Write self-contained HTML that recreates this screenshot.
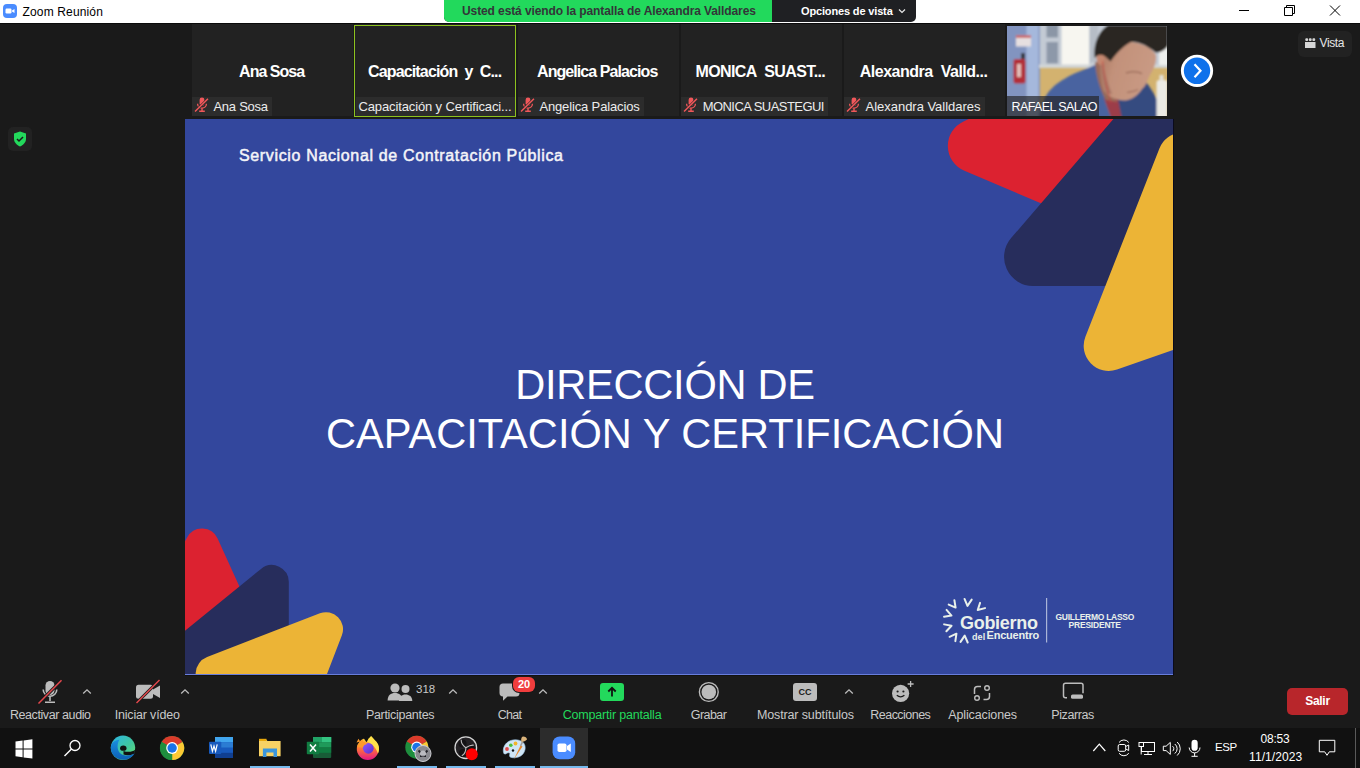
<!DOCTYPE html>
<html><head><meta charset="utf-8">
<style>
*{margin:0;padding:0;box-sizing:border-box}
html,body{width:1360px;height:768px;overflow:hidden;background:#1a1a1a;font-family:"Liberation Sans",sans-serif}
.a{position:absolute}
.t{position:absolute;white-space:nowrap;line-height:1}
#title{left:0;top:0;width:1360px;height:23px;background:#fff}
#banner{left:444px;top:0;width:472px;height:22px;border-radius:0 0 5px 5px;overflow:hidden;background:#1f2023}
#banner .g{left:0;top:0;width:328px;height:22px;background:#22d95c}
.tile{position:absolute;top:26px;width:160px;height:90px;background:#222222}
.tile .nm{position:absolute;left:0;right:0;top:37px;text-align:center;color:#fff;font-weight:bold;font-size:15px;line-height:1}
.tile .lb{position:absolute;left:0;bottom:0;height:19px;background:#2c2c2c;color:#e6e6e6;font-size:12.5px;line-height:19px;padding-left:22px;padding-right:4px;white-space:nowrap}
.mic{position:absolute;left:5px;top:3px;width:12px;height:13px}
#slide{left:185px;top:119px;width:988px;height:556px;background:#33479d;overflow:hidden}
.tb{position:absolute;top:708px;color:#c9c9c9;font-size:12.5px;line-height:1;white-space:nowrap}
#taskbar{left:0;top:728px;width:1360px;height:40px;background:#111111}
.ul{position:absolute;top:766px;height:2px;background:#76b9ed}
</style></head><body>

<div id="title" class="a">
  <svg class="a" style="left:3px;top:4px" width="14" height="14" viewBox="0 0 14 14"><rect width="14" height="14" rx="4" fill="#4a8cff"/><rect x="2.5" y="4.5" width="6" height="5" rx="1.2" fill="#fff"/><path d="M9 6.5 L11.5 5 V9 L9 7.5Z" fill="#fff"/></svg>
  <div class="t" id="ttl" style="left:22.5px;top:6px;font-size:12px;letter-spacing:0.15px;color:#000">Zoom Reunión</div>
  <svg class="a" style="left:1239px;top:5px" width="102" height="11" viewBox="0 0 102 11">
    <path d="M0 5.5H10" stroke="#000" stroke-width="1"/>
    <path d="M45.5 2.5h8v8h-8z M47.5 2.5V0.5h8v8h-2" fill="none" stroke="#000" stroke-width="1"/>
    <path d="M91 0.5L101 10.5M101 0.5L91 10.5" stroke="#000" stroke-width="1"/>
  </svg>
</div>

<div class="a" style="left:0;top:23px;width:1360px;height:1px;background:#0b0b0b"></div>
<div id="banner" class="a">
  <div class="a g"></div>
  <div class="t" id="bn1" style="left:18px;top:5px;font-size:12px;font-weight:bold;letter-spacing:-0.1px;color:#333538">Usted está viendo la pantalla de Alexandra Valldares</div>
  <div class="t" id="bn2" style="left:357px;top:6px;font-size:11px;font-weight:bold;letter-spacing:-0.15px;color:#fff">Opciones de vista</div>
  <svg class="a" style="left:454px;top:8px" width="8" height="6" viewBox="0 0 8 6"><path d="M1 1.5L4 4.5L7 1.5" fill="none" stroke="#e8e8e8" stroke-width="1.2"/></svg>
</div>

<!-- tiles -->
<div class="a" style="left:192px;top:24px;width:161px;height:92px;background:#222222"></div>
<div class="t nmx" style="left:239.1px;top:64px;font-size:16px;font-weight:bold;color:#fff;letter-spacing:-0.98px">Ana Sosa</div>
<div class="a" style="left:192px;top:97px;width:80px;height:19px;background:#2c2c2c"></div>
<svg class="a" style="left:194px;top:96px" width="16" height="17" viewBox="0 0 16 17"><rect x="5.6" y="1.5" width="4.8" height="8.5" rx="2.4" fill="#f0575a"/><path d="M3.6 7.8a4.4 4.4 0 0 0 8.8 0" fill="none" stroke="#f0575a" stroke-width="1.3"/><path d="M8 12.3v2.2M5.2 15.2h5.6" stroke="#f0575a" stroke-width="1.4"/><path d="M0.8 15.8L14.2 2.6" stroke="#2b2b2b" stroke-width="2.6"/><path d="M1 15.5L14 2.7" stroke="#f0575a" stroke-width="1.5"/></svg>
<div class="t lbx" style="left:213.4px;top:100px;font-size:13px;color:#ececec;letter-spacing:-0.24px">Ana Sosa</div>
<div class="a" style="left:355px;top:24px;width:161px;height:92px;background:#222222"></div>
<div class="a" style="left:354px;top:25px;width:162px;height:92px;border:1px solid #8dc21f"></div>
<div class="t nmx" style="left:368.0px;top:64px;font-size:16px;font-weight:bold;color:#fff;letter-spacing:-0.85px">Capacitación&nbsp; y&nbsp; C...</div>
<div class="a" style="left:356px;top:97px;width:159px;height:19px;background:#2c2c2c"></div>
<div class="t lbx" style="left:358.5px;top:100px;font-size:13px;color:#ececec;letter-spacing:-0.13px">Capacitación y Certificaci...</div>
<div class="a" style="left:518px;top:24px;width:161px;height:92px;background:#222222"></div>
<div class="t nmx" style="left:537.0px;top:64px;font-size:16px;font-weight:bold;color:#fff;letter-spacing:-0.92px">Angelica Palacios</div>
<div class="a" style="left:518px;top:97px;width:126px;height:19px;background:#2c2c2c"></div>
<svg class="a" style="left:520px;top:96px" width="16" height="17" viewBox="0 0 16 17"><rect x="5.6" y="1.5" width="4.8" height="8.5" rx="2.4" fill="#f0575a"/><path d="M3.6 7.8a4.4 4.4 0 0 0 8.8 0" fill="none" stroke="#f0575a" stroke-width="1.3"/><path d="M8 12.3v2.2M5.2 15.2h5.6" stroke="#f0575a" stroke-width="1.4"/><path d="M0.8 15.8L14.2 2.6" stroke="#2b2b2b" stroke-width="2.6"/><path d="M1 15.5L14 2.7" stroke="#f0575a" stroke-width="1.5"/></svg>
<div class="t lbx" style="left:539.4px;top:100px;font-size:13px;color:#ececec;letter-spacing:-0.14px">Angelica Palacios</div>
<div class="a" style="left:681px;top:24px;width:161px;height:92px;background:#222222"></div>
<div class="t nmx" style="left:695.5px;top:64px;font-size:16px;font-weight:bold;color:#fff;letter-spacing:-0.62px">MONICA&nbsp; SUAST...</div>
<div class="a" style="left:681px;top:97px;width:147px;height:19px;background:#2c2c2c"></div>
<svg class="a" style="left:683px;top:96px" width="16" height="17" viewBox="0 0 16 17"><rect x="5.6" y="1.5" width="4.8" height="8.5" rx="2.4" fill="#f0575a"/><path d="M3.6 7.8a4.4 4.4 0 0 0 8.8 0" fill="none" stroke="#f0575a" stroke-width="1.3"/><path d="M8 12.3v2.2M5.2 15.2h5.6" stroke="#f0575a" stroke-width="1.4"/><path d="M0.8 15.8L14.2 2.6" stroke="#2b2b2b" stroke-width="2.6"/><path d="M1 15.5L14 2.7" stroke="#f0575a" stroke-width="1.5"/></svg>
<div class="t lbx" style="left:702.7px;top:100px;font-size:13px;color:#ececec;letter-spacing:-0.55px">MONICA SUASTEGUI</div>
<div class="a" style="left:844px;top:24px;width:161px;height:92px;background:#222222"></div>
<div class="t nmx" style="left:859.7px;top:64px;font-size:16px;font-weight:bold;color:#fff;letter-spacing:-0.48px">Alexandra&nbsp; Valld...</div>
<div class="a" style="left:844px;top:97px;width:141px;height:19px;background:#2c2c2c"></div>
<svg class="a" style="left:846px;top:96px" width="16" height="17" viewBox="0 0 16 17"><rect x="5.6" y="1.5" width="4.8" height="8.5" rx="2.4" fill="#f0575a"/><path d="M3.6 7.8a4.4 4.4 0 0 0 8.8 0" fill="none" stroke="#f0575a" stroke-width="1.3"/><path d="M8 12.3v2.2M5.2 15.2h5.6" stroke="#f0575a" stroke-width="1.4"/><path d="M0.8 15.8L14.2 2.6" stroke="#2b2b2b" stroke-width="2.6"/><path d="M1 15.5L14 2.7" stroke="#f0575a" stroke-width="1.5"/></svg>
<div class="t lbx" style="left:865.6px;top:100px;font-size:13px;color:#ececec;letter-spacing:-0.03px">Alexandra Valldares</div>
<div class="a" style="left:1007px;top:26px;width:160px;height:90px;overflow:hidden">
<svg class="a" style="left:0;top:0" width="160" height="90" viewBox="1007 26 160 90">
<defs><linearGradient id="skin" x1="0" y1="0" x2="1" y2="0.3"><stop offset="0" stop-color="#a8745f"/><stop offset="0.35" stop-color="#c2917a"/><stop offset="1" stop-color="#c99a84"/></linearGradient><filter id="bl" x="-10%" y="-10%" width="120%" height="120%"><feGaussianBlur stdDeviation="1.1"/></filter></defs>
<rect x="1000" y="20" width="180" height="100" fill="#d3b26f"/>
<g filter="url(#bl)">
<rect x="1039" y="20" width="130" height="48" fill="#c3cad4"/>
<rect x="1004" y="22" width="36" height="98" fill="#8294c0"/>
<rect x="1026.5" y="22" width="12" height="98" fill="#a5b8dc"/>
<rect x="1046.5" y="22" width="11.5" height="15.5" fill="#8b96a6"/>
<rect x="1046.5" y="42" width="11.5" height="21.5" fill="#8d98a9"/>
<rect x="1061.5" y="20" width="27.5" height="45" fill="#f7f6f0"/>
<rect x="1090" y="22" width="8" height="40" fill="#b6bdc6"/>
<rect x="1039" y="64.5" width="130" height="3.5" fill="#d2d5d6"/>
<rect x="1159" y="44" width="10" height="21" fill="#eef0ee"/>
<rect x="1016" y="35.5" width="15" height="11" fill="#e6dfe0"/>
<rect x="1016" y="35.5" width="15" height="2.2" fill="#c9484c"/>
<rect x="1021" y="53" width="4" height="10" fill="#35343c"/>
<rect x="1013.5" y="59" width="12" height="24.5" rx="2" fill="#b32d37"/>
<rect x="1017" y="64" width="4" height="13" fill="#e3bdb8"/>
<path d="M1038 120 L1044 100 C1050 86 1064 77 1088 68 L1097 64 L1100 82 L1106 104 L1112 120Z" fill="#4863a0"/>
<path d="M1097 64 L1100 82 L1106 104 L1112 120 L1165 120 C1160 104 1154 92 1146 82 L1130 96Z" fill="#364c80"/>
<path d="M1104 98 L1112 120 L1122 120 L1118 99Z" fill="#9c3c48"/>
<path d="M1095 62 C1096 76 1100 90 1106 100 L1118 102 C1110 94 1104 80 1102 62Z" fill="#9a6a58"/>
<path d="M1101 50 C1109 44 1120 42 1130 42 C1142 43 1152 48 1156 55 C1157 63 1153 70 1150 75 C1147 81 1146 86 1142 89 C1138 95 1132 100 1125 100.5 C1116 100.5 1109 97 1104 91 C1100 81 1099 64 1101 50Z" fill="url(#skin)"/>
<path d="M1101 56 C1104 70 1108 84 1112 94 L1106 94 C1102 82 1100 70 1101 56Z" fill="#a97866"/>
<ellipse cx="1100.5" cy="57.5" rx="4" ry="7.5" fill="#c4876f"/>
<path d="M1094.5 58 C1093 42 1100 30 1108 25 L1168 25 L1168 46 C1164 51 1159 53 1155.5 52.5 C1149 47 1140 41.5 1131 42 C1123 46 1115 55 1110.5 61.5 C1106 57 1101 51 1094.5 58Z" fill="#2c2624"/>
<path d="M1126 73 C1131 71.5 1138 71.5 1142 73.5" fill="none" stroke="#8e604f" stroke-width="1.1"/>
<path d="M1127 92.5 C1131 91.5 1135 91.5 1138 89.5" fill="none" stroke="#946255" stroke-width="1"/>
<path d="M1102.5 61 C1104 75 1107 90 1111 103" fill="none" stroke="#cf3b3b" stroke-width="0.7"/>
<rect x="1156.5" y="80" width="11" height="40" rx="3" fill="#ebeae4"/>
<rect x="1159.5" y="75" width="4" height="6" fill="#e4e2dc"/>
</g>
</svg>
<div class="a" style="left:0;top:70px;width:92px;height:20px;background:rgba(38,38,42,0.7)"></div>
<div class="t" id="rs" style="left:4.5px;top:75px;font-size:12.5px;letter-spacing:-0.6px;color:#fff">RAFAEL SALAO</div>
</div>

<!-- next button -->
<svg class="a" style="left:1180px;top:54px" width="34" height="34" viewBox="0 0 34 34"><circle cx="17" cy="16.8" r="16.1" fill="#fff"/><circle cx="17" cy="16.8" r="13.2" fill="#0e71eb"/><path d="M14.5 10.3L20.5 16.8L14.5 23.3" fill="none" stroke="#fff" stroke-width="2.2"/></svg>

<!-- vista -->
<div class="a" style="left:1298px;top:31px;width:54px;height:26px;background:#222222;border-radius:6px"></div>
<svg class="a" style="left:1305px;top:38px" width="10.5" height="10" viewBox="0 0 10.5 10"><rect x="0" y="4" width="10.5" height="6" fill="#d6d6d6"/><rect x="0.3" y="0.3" width="2.8" height="2.6" rx="1" fill="#d6d6d6"/><rect x="3.85" y="0.3" width="2.8" height="2.6" rx="1" fill="#d6d6d6"/><rect x="7.4" y="0.3" width="2.8" height="2.6" rx="1" fill="#d6d6d6"/></svg>
<div class="t" style="left:1319.5px;top:37px;font-size:12px;letter-spacing:-0.4px;color:#e6e6e6">Vista</div>

<!-- shield -->
<div class="a" style="left:8px;top:127px;width:24px;height:24px;background:#222;border-radius:5px"></div>
<svg class="a" style="left:13px;top:131px" width="14" height="16" viewBox="0 0 14 16"><path d="M7 0.5L13 2.5V8c0 3.5-3 6-6 7.5C4 14 1 11.5 1 8V2.5Z" fill="#23d95c"/><path d="M4 8l2 2 4-4" fill="none" stroke="#1a1a1a" stroke-width="1.5"/></svg>

<div id="slide" class="a">
<svg class="a" style="left:0;top:0" width="988" height="556" viewBox="185 119 988 556">
<path fill="#dc2230" d="M964.4 170.8 A27.0 27.0 0 0 1 963.5 121.4L1200.0 11.0L1090.0 224.0Z"/>
<path fill="#272d5c" d="M1011.1 238.1 A29.0 29.0 0 0 0 1033.1 286.0L1250.0 286.0L1189.0 31.0Z"/>
<path fill="#ecb436" d="M1117.0 369.5 A25.0 25.0 0 0 1 1085.4 336.8L1159.4 148.4 A25.0 25.0 0 0 1 1204.1 144.6L1301.5 305.0Z"/>
<path fill="#dc2230" d="M187.1 537.4 A17.0 17.0 0 0 1 217.6 538.4L300.0 720.0L100.0 700.0Z"/>
<path fill="#272d5c" d="M261.0 568.9 A17.0 17.0 0 0 1 288.8 582.1L288.8 800.0L100.0 700.0Z"/>
<path fill="#ecb436" d="M319.9 613.3 A17.0 17.0 0 0 1 341.9 635.3L301.6 740.0L205.3 689.7 A18.0 18.0 0 0 1 207.1 657.0Z"/>
</svg>
<div class="t" style="left:54px;top:29px;font-size:16px;-webkit-text-stroke:0.5px #f4f4f8;letter-spacing:0.65px;color:#f4f4f8">Servicio Nacional de Contratación Pública</div>
<div class="t" style="left:0;width:960px;top:241px;text-align:center;font-size:41.6px;line-height:49px;color:#fff"><span style="letter-spacing:-0.25px">DIRECCIÓN DE</span><br>CAPACITACIÓN Y CERTIFICACIÓN</div>
</div>
<div class="a" style="left:185px;top:674px;width:988px;height:1px;background:#687ddc"></div>
<div class="a" style="left:185px;top:675px;width:989px;height:1px;background:#121210"></div>
<div class="a" style="left:1173px;top:119px;width:1px;height:556px;background:#0b0b1c"></div>
<div id="logo">
<svg class="a" style="left:930px;top:590px" width="220" height="60" viewBox="930 590 220 60">
<path transform="translate(953.5 604.9) rotate(-37.8)" d="M-3.6 -3.2L0 3.4L3.6 -3.2" fill="none" stroke="#e9f0ea" stroke-width="2" stroke-linejoin="round" stroke-linecap="round"/>
<path transform="translate(967.8 602.5) rotate(5.6)" d="M-3.6 -3.2L0 3.4L3.6 -3.2" fill="none" stroke="#e9f0ea" stroke-width="2" stroke-linejoin="round" stroke-linecap="round"/>
<path transform="translate(980.2 607.7) rotate(46.9)" d="M-3.6 -3.2L0 3.4L3.6 -3.2" fill="none" stroke="#e9f0ea" stroke-width="2" stroke-linejoin="round" stroke-linecap="round"/>
<path transform="translate(948.3 614.4) rotate(-69.6)" d="M-3.6 -3.2L0 3.4L3.6 -3.2" fill="none" stroke="#e9f0ea" stroke-width="2" stroke-linejoin="round" stroke-linecap="round"/>
<path transform="translate(948.3 626.8) rotate(-108.1)" d="M-3.6 -3.2L0 3.4L3.6 -3.2" fill="none" stroke="#e9f0ea" stroke-width="2" stroke-linejoin="round" stroke-linecap="round"/>
<path transform="translate(954.4 636.4) rotate(-143.0)" d="M-3.6 -3.2L0 3.4L3.6 -3.2" fill="none" stroke="#e9f0ea" stroke-width="2" stroke-linejoin="round" stroke-linecap="round"/>
<path transform="translate(964.4 639.0) rotate(-174.9)" d="M-3.6 -3.2L0 3.4L3.6 -3.2" fill="none" stroke="#e9f0ea" stroke-width="2" stroke-linejoin="round" stroke-linecap="round"/>
<rect x="1046" y="598" width="1.2" height="44.5" fill="#aab4d8"/>
</svg>
<div class="t lg" style="left:960px;top:614px;font-size:18px;font-weight:bold;color:#e9f0ea;letter-spacing:-0.3px">Gobierno</div>
<div class="t lg" style="left:972px;top:632.5px;font-size:9px;letter-spacing:0.1px;font-weight:bold;color:#e9f0ea">del</div>
<div class="t lg" style="left:986.5px;top:630px;font-size:11px;letter-spacing:-0.2px;font-weight:bold;color:#e9f0ea">Encuentro</div>
<div class="t lg" style="left:1055.5px;top:613px;font-size:8.5px;letter-spacing:-0.27px;font-weight:bold;color:#e9f0ea">GUILLERMO LASSO</div>
<div class="t lg" style="left:1068.5px;top:621px;font-size:8.5px;letter-spacing:-0.2px;font-weight:bold;color:#e9f0ea">PRESIDENTE</div>
</div>

<!-- toolbar -->
<div id="toolbar">
<!-- mic -->
<svg class="a" style="left:36px;top:678px" width="28" height="28" viewBox="36 678 28 28">
<rect x="45.5" y="681" width="9" height="14" rx="4.5" fill="#bcbcbc"/>
<path d="M43.2 689.5a6.8 6.8 0 0 0 13.6 0" fill="none" stroke="#bcbcbc" stroke-width="1.6"/>
<path d="M50 696.5V701M45 702.3h10" stroke="#bcbcbc" stroke-width="1.6"/>
<path d="M38.5 703.5L61.5 680.3" stroke="#1a1a1a" stroke-width="3.2"/>
<path d="M38.5 703.5L61.5 680.3" stroke="#e5484d" stroke-width="1.5"/>
</svg>
<svg class="a" style="left:82px;top:688px" width="10" height="7" viewBox="0 0 10 7"><path d="M1.2 5.5L5 1.8L8.8 5.5" fill="none" stroke="#bcbcbc" stroke-width="1.3"/></svg>
<div class="tb" style="left:9.9px;top:709px;letter-spacing:-0.41px">Reactivar audio</div>
<!-- video -->
<svg class="a" style="left:134px;top:678px" width="30" height="28" viewBox="134 678 30 28">
<rect x="136" y="684.7" width="17" height="14" rx="2.5" fill="#bcbcbc"/>
<path d="M153 689.5L160 685.5V698L153 694Z" fill="#bcbcbc"/>
<path d="M136.5 703L159.5 680" stroke="#1a1a1a" stroke-width="3"/>
<path d="M136.5 703L159.5 680" stroke="#e5484d" stroke-width="1.5"/>
</svg>
<svg class="a" style="left:180px;top:688px" width="10" height="7" viewBox="0 0 10 7"><path d="M1.2 5.5L5 1.8L8.8 5.5" fill="none" stroke="#bcbcbc" stroke-width="1.3"/></svg>
<div class="tb" style="left:114.7px;top:709px;letter-spacing:-0.18px">Iniciar vídeo</div>
<!-- participants -->
<svg class="a" style="left:386px;top:682px" width="28" height="21" viewBox="386 682 28 21">
<circle cx="395" cy="688" r="4.6" fill="#bcbcbc"/>
<path d="M387.6 700.5c0-5 3.2-7.4 7.4-7.4s7.4 2.4 7.4 7.4Z" fill="#bcbcbc"/>
<circle cx="405.5" cy="689" r="4" fill="#bcbcbc"/>
<path d="M399 701c0-4.5 2.8-6.6 6.5-6.6s6.8 2.1 6.8 6.6Z" fill="#bcbcbc"/>
</svg>
<div class="tb" style="left:416px;top:684px;font-size:11.5px">318</div>
<svg class="a" style="left:448px;top:688px" width="10" height="7" viewBox="0 0 10 7"><path d="M1.2 5.5L5 1.8L8.8 5.5" fill="none" stroke="#bcbcbc" stroke-width="1.3"/></svg>
<div class="tb" style="left:365.9px;top:709px;letter-spacing:-0.30px">Participantes</div>
<!-- chat -->
<svg class="a" style="left:498px;top:682px" width="24" height="20" viewBox="498 682 24 20">
<path d="M502 683.5h14a3.5 3.5 0 0 1 3.5 3.5v6a3.5 3.5 0 0 1-3.5 3.5h-8.5l-4.5 4.3v-4.4a3.5 3.5 0 0 1-3.5-3.4v-6a3.5 3.5 0 0 1 3.5-3.5Z" fill="#bcbcbc"/>
</svg>
<div class="a" style="left:512px;top:676px;width:24px;height:17px;border-radius:7px;background:#1a1a1a"></div><div class="a" style="left:513px;top:677px;width:22px;height:15px;border-radius:6px;background:#f03d3d"></div>
<div class="t" style="left:513px;top:679px;width:22px;text-align:center;font-size:11px;font-weight:bold;color:#fff">20</div>
<svg class="a" style="left:538px;top:688px" width="10" height="7" viewBox="0 0 10 7"><path d="M1.2 5.5L5 1.8L8.8 5.5" fill="none" stroke="#bcbcbc" stroke-width="1.3"/></svg>
<div class="tb" style="left:497.8px;top:709px;letter-spacing:-0.72px">Chat</div>
<!-- share -->
<div class="a" style="left:600px;top:683px;width:24px;height:18px;border-radius:3px;background:#23d95c"></div>
<svg class="a" style="left:600px;top:683px" width="24" height="18" viewBox="0 0 24 18"><path d="M12 13.5V5M8.3 8.5L12 4.8L15.7 8.5" fill="none" stroke="#111" stroke-width="1.8"/></svg>
<div class="tb" style="left:562.7px;top:709px;letter-spacing:-0.19px;color:#23d95c">Compartir pantalla</div>
<!-- record -->
<svg class="a" style="left:697px;top:681px" width="24" height="23" viewBox="697 681 24 23">
<circle cx="708.8" cy="692" r="9.4" fill="none" stroke="#bcbcbc" stroke-width="1.4"/>
<circle cx="708.8" cy="692" r="7.3" fill="#bcbcbc"/>
</svg>
<div class="tb" style="left:690.8px;top:709px;letter-spacing:-0.57px">Grabar</div>
<!-- cc -->
<div class="a" style="left:793px;top:683px;width:24px;height:18px;border-radius:3px;background:#bcbcbc"></div>
<div class="t" style="left:793px;top:688px;width:24px;text-align:center;font-size:9px;font-weight:bold;color:#1a1a1a">CC</div>
<svg class="a" style="left:844px;top:688px" width="10" height="7" viewBox="0 0 10 7"><path d="M1.2 5.5L5 1.8L8.8 5.5" fill="none" stroke="#bcbcbc" stroke-width="1.3"/></svg>
<div class="tb" style="left:757.0px;top:709px;letter-spacing:-0.14px">Mostrar subtítulos</div>
<!-- reactions -->
<svg class="a" style="left:890px;top:679px" width="24" height="24" viewBox="890 679 24 24">
<circle cx="900.6" cy="693.3" r="8.6" fill="#bcbcbc"/>
<circle cx="897.6" cy="691.5" r="1.1" fill="#1a1a1a"/><circle cx="903.4" cy="691.5" r="1.1" fill="#1a1a1a"/>
<path d="M896.8 695.2q3.8 3.2 7.6 0" fill="none" stroke="#1a1a1a" stroke-width="1.3"/>
<path d="M906 684.6a8.6 8.6 0 0 1 3 3" fill="none" stroke="#1a1a1a" stroke-width="3"/>
<path d="M910.6 681v6M907.6 684h6" stroke="#bcbcbc" stroke-width="1.3"/>
</svg>
<div class="tb" style="left:870.3px;top:709px;letter-spacing:-0.53px">Reacciones</div>
<!-- apps -->
<svg class="a" style="left:972px;top:683px" width="20" height="20" viewBox="972 683 20 20">
<path d="M974.5 694v-4.5a3 3 0 0 1 3-3h3.5M983.5 699.5h3a3 3 0 0 0 3-3V693" fill="none" stroke="#bcbcbc" stroke-width="1.5"/>
<circle cx="987" cy="688" r="2.3" fill="none" stroke="#bcbcbc" stroke-width="1.4"/>
<circle cx="977" cy="698" r="2.3" fill="none" stroke="#bcbcbc" stroke-width="1.4"/>
</svg>
<div class="tb" style="left:948.3px;top:709px;letter-spacing:-0.13px">Aplicaciones</div>
<!-- whiteboard -->
<svg class="a" style="left:1061px;top:681px" width="24" height="20" viewBox="1061 681 24 20">
<path d="M1067 697.8h-1.5a2 2 0 0 1-2-2v-10.5a2 2 0 0 1 2-2h15.5a2 2 0 0 1 2 2v8" fill="none" stroke="#bcbcbc" stroke-width="1.5"/>
<rect x="1071" y="694.5" width="12" height="4.3" rx="1.6" fill="#bcbcbc"/>
</svg>
<div class="tb" style="left:1051.3px;top:709px;letter-spacing:-0.41px">Pizarras</div>
<!-- salir -->
<div class="a" style="left:1287px;top:688px;width:61px;height:27px;border-radius:5px;background:#b8262b"></div>
<div class="t" style="left:1287px;top:695px;width:61px;text-align:center;font-size:12px;font-weight:bold;letter-spacing:-0.3px;color:#fff">Salir</div>
</div>

<div id="taskbar" class="a"></div>
<svg class="a" style="left:0;top:728px" width="1360" height="40" viewBox="0 728 1360 40">
<defs>
<linearGradient id="edg" x1="0" y1="0" x2="1" y2="1"><stop offset="0" stop-color="#2bb5e8"/><stop offset="0.55" stop-color="#3fc6a0"/><stop offset="1" stop-color="#6ae06a"/></linearGradient>
<linearGradient id="edb" x1="0" y1="0" x2="0" y2="1"><stop offset="0" stop-color="#1a8fe0"/><stop offset="1" stop-color="#0c5fb5"/></linearGradient>
<linearGradient id="ffx" x1="0" y1="0" x2="0" y2="1"><stop offset="0" stop-color="#ffd43b"/><stop offset="0.5" stop-color="#ff7139"/><stop offset="1" stop-color="#e31587"/></linearGradient>
<linearGradient id="ffp" x1="0" y1="0" x2="1" y2="1"><stop offset="0" stop-color="#9059ff"/><stop offset="1" stop-color="#5b2fc9"/></linearGradient>
</defs>
<!-- windows -->
<path d="M15.5 741.6l7.1-1v7.8h-7.1Z M23.6 740.4l8.8-1.2v9.2h-8.8Z M15.5 749.4h7.1v7.8l-7.1-1Z M23.6 749.4h8.8v9.2l-8.8-1.2Z" fill="#fff"/>
<!-- search -->
<circle cx="75" cy="745.5" r="5" fill="none" stroke="#fff" stroke-width="1.3"/>
<path d="M71.5 749L64.5 756" stroke="#fff" stroke-width="1.5"/>
<!-- edge -->
<circle cx="123" cy="747.8" r="12.2" fill="url(#edg)"/>
<ellipse cx="123.3" cy="748.2" rx="3.2" ry="2.6" fill="#111"/>
<path d="M123.5 751c3.6 1.4 9 1.2 11.6-1.2-0.2 1.6-0.6 3-1.2 4.2-3 1.6-7.4 1.8-10.4 0.6Z" fill="#111"/>
<path d="M110.8 747.8c0-4.2 3.6-8 8.6-8-1.2 2-1.8 4.4-1.8 7 0 5.2 3.6 8.6 8.4 8.6 3.4 0 6.6-0.6 8.6-2.2-2.2 4-6.4 6.6-11.4 6.6-6.8 0-12.4-5.3-12.4-12Z" fill="url(#edb)"/>
<!-- chrome -->
<g transform="translate(172.1 748)">
<circle r="12.1" fill="#1e8e3e"/>
<path d="M0 0L-10.48 -6.05A12.1 12.1 0 0 1 10.48 -6.05Z" fill="#db3b2b"/>
<path d="M0 0L10.48 -6.05A12.1 12.1 0 0 1 0 12.1Z" fill="#fcc934"/>
<path d="M0 0L0 12.1A12.1 12.1 0 0 1 -10.48 -6.05Z" fill="#1e8e3e"/>
<circle r="5.9" fill="#fff"/><circle r="4.7" fill="#1a73e8"/>
</g>
<!-- word -->
<rect x="215" y="737" width="18" height="21" rx="1" fill="#185abd"/>
<rect x="215" y="737" width="18" height="5.3" fill="#41a5ee"/>
<rect x="215" y="742.3" width="18" height="5.2" fill="#2b7cd3"/>
<rect x="215" y="752.8" width="18" height="5.2" fill="#103f91"/>
<rect x="209" y="741.8" width="12.3" height="12.1" rx="0.8" fill="#185abd"/>
<path d="M210.8 744.3l1.6 7 1.6-5.2 1.6 5.2 1.6-7" fill="none" stroke="#fff" stroke-width="1.2"/>
<!-- explorer -->
<path d="M259 739.5h7l1.5 1.5h13.1v15.3h-21.6Z" fill="#f8d264"/>
<rect x="259" y="738.8" width="7.5" height="2.2" fill="#e8a80c"/>
<path d="M262.9 757v-8.5h14.1v8.5h-3.5v-4.5h-7.1v4.5Z" fill="#3a96dd"/>
<!-- excel -->
<rect x="313" y="737" width="18.2" height="21" rx="1" fill="#185c37"/>
<rect x="313" y="737" width="18.2" height="5.3" fill="#21a366"/>
<rect x="322" y="737" width="9.2" height="5.3" fill="#33c481"/>
<rect x="313" y="742.3" width="18.2" height="5.2" fill="#1f9a5a"/>
<rect x="313" y="747.5" width="18.2" height="5.3" fill="#107c41"/>
<rect x="306.8" y="741.8" width="12.4" height="12.4" rx="0.8" fill="#107c41"/>
<path d="M310 744.5l6 7M316 744.5l-6 7" stroke="#fff" stroke-width="1.5"/>
<!-- firefox -->
<circle cx="367.8" cy="749" r="11" fill="url(#ffx)"/>
<path d="M362.5 736.5L366.5 742.2L369.8 736.5Z" fill="#111"/>
<path d="M356.5 742.5L358.5 738.8L360.2 741.5Z M359.5 741.5L362.5 739.5L363.2 742.5Z" fill="#ff9a2b"/>
<path d="M367.5 741.8C368.5 738.5 370 736.6 371.2 735.9 373 738.3 376.5 741 378.2 744.5 379.6 748 379 751.5 378 753.5 376 748 372 743.5 367.5 741.8Z" fill="#ffe14a"/>
<circle cx="368.3" cy="748.3" r="5.4" fill="url(#ffp)"/>
<path d="M357 746.5C358 743 360.5 741.5 363 741.5 364.5 741.5 366 742.5 367 744 365 744.3 363.5 745.5 362.6 747.5 360.5 747.8 358.5 747.5 357 746.5Z" fill="#ff9a2b"/>
<!-- chrome 2 -->
<g transform="translate(416.8 747.2)">
<circle r="11.5" fill="#1e8e3e"/>
<path d="M0 0L-9.96 -5.75A11.5 11.5 0 0 1 9.96 -5.75Z" fill="#db3b2b"/>
<path d="M0 0L9.96 -5.75A11.5 11.5 0 0 1 0 11.5Z" fill="#fcc934"/>
<circle r="5.6" fill="#fff"/><circle r="4.5" fill="#1a73e8"/>
</g>
<circle cx="423" cy="753.5" r="8" fill="#8a8a90"/>
<circle cx="423" cy="753.5" r="8" fill="none" stroke="#cfcfd4" stroke-width="1"/>
<path d="M418.5 750.5l2 2M427.5 750.5l-2 2M420 756h6" stroke="#1f1f26" stroke-width="1.8"/>
<circle cx="423" cy="753.5" r="3" fill="#d0d0d6" opacity="0.7"/>
<!-- obs -->
<circle cx="465.8" cy="747.7" r="10.8" fill="#232124" stroke="#d4d4d4" stroke-width="1.3"/>
<circle cx="462.5" cy="743.5" r="4" fill="#141214"/><circle cx="471" cy="748.5" r="4" fill="#141214"/><circle cx="463" cy="753" r="4" fill="#141214"/>
<path d="M465.8 747.7C463.2 746 461 743.5 461.2 739.8M465.8 747.7C468.2 746.2 470.8 744.8 473.8 745.2M465.8 747.7C466 751 464.6 754 461.8 755.8" fill="none" stroke="#bdbdbd" stroke-width="1.1"/>
<circle cx="471.8" cy="754.2" r="6" fill="#ff0000"/>
<!-- paint -->
<path d="M503.5 752.5C502.5 748 505 743 510 740.8 515 738.8 521.5 739.8 524 743.5 526 746.5 525.5 751 522.5 754.5 519.5 757.5 514.5 758.5 510.5 757.2 509 756.6 509.5 754.8 510 753.5 508.8 752.2 507.5 752.8 506 753.8 504.8 754.6 503.8 753.8 503.5 752.5Z" fill="#cfe5f5" stroke="#9fc6e6" stroke-width="0.6"/>
<circle cx="507" cy="749" r="1.9" fill="#e24a4a"/>
<circle cx="510.8" cy="745.2" r="1.8" fill="#4cbf3e"/>
<circle cx="515.5" cy="743.5" r="1.9" fill="#f2b52c"/>
<circle cx="513" cy="750.5" r="1.2" fill="#111"/>
<path d="M513.8 759.5L520.5 745.5 522.5 746.5Z" fill="#e8892c"/>
<path d="M520.6 745.8L522.6 741.6" stroke="#a0a0a0" stroke-width="1.6"/>
<path d="M521.3 741.8C520.8 739 521.5 737 523 736.6 524.8 736.5 527 737.8 527 739.4 525.5 740.8 523.5 741.8 521.3 741.8Z" fill="#d9b27a"/>
<!-- zoom active -->
<rect x="540" y="728" width="48" height="40" fill="#2c2c2c"/>
<rect x="552.6" y="736.4" width="22.6" height="22.8" rx="7" fill="#4a8cff"/>
<rect x="557.5" y="743.5" width="9" height="8.5" rx="1.8" fill="#fff"/>
<path d="M567 746l3.8-2.5v8.5l-3.8-2.5Z" fill="#fff"/>
<!-- underlines -->
<rect x="250" y="766" width="40" height="2" fill="#76b9ed"/>
<rect x="397" y="766" width="40" height="2" fill="#76b9ed"/>
<rect x="446" y="766" width="40" height="2" fill="#76b9ed"/>
<rect x="495" y="766" width="40" height="2" fill="#76b9ed"/>
<rect x="540" y="766" width="48" height="2" fill="#76b9ed"/>
<!-- tray -->
<path d="M1093.3 751L1099.3 744.2L1105.3 751" fill="none" stroke="#fff" stroke-width="1.2"/>
<path d="M1119 742.5a6 6 0 0 1 9.8 0M1119 753.2a6 6 0 0 0 9.8 0" fill="none" stroke="#fff" stroke-width="1"/>
<rect x="1118.2" y="744.5" width="7.5" height="6.8" rx="1.5" fill="none" stroke="#fff" stroke-width="1"/>
<path d="M1125.7 746.5l3-1.5v5.5l-3-1.5" fill="none" stroke="#fff" stroke-width="1"/>
<rect x="1141.5" y="742.5" width="13" height="9" fill="none" stroke="#fff" stroke-width="1"/>
<path d="M1148 751.5v3M1144 754.5h8" stroke="#fff" stroke-width="1"/>
<rect x="1139" y="742.5" width="4.5" height="4" fill="#111" stroke="#fff" stroke-width="1"/>
<path d="M1141.2 746.5v8" stroke="#fff" stroke-width="1"/>
<path d="M1163.3 746.2h2.8l4.2-3.8v12l-4.2-3.8h-2.8Z" fill="none" stroke="#fff" stroke-width="1"/>
<path d="M1172.5 746.2a3 3 0 0 1 0 5M1174.8 744a6 6 0 0 1 0 9.5M1177.2 742a9 9 0 0 1 0 13.5" fill="none" stroke="#fff" stroke-width="1"/>
<rect x="1191.5" y="739.8" width="6.2" height="11" rx="3.1" fill="#fff"/>
<path d="M1189.2 747.5a5.4 5.4 0 0 0 10.8 0M1194.6 753v3.3M1191.5 756.3h6.2" fill="none" stroke="#fff" stroke-width="1"/>
<path d="M1319.3 740.3h15.5v11.5h-5.5l-2.3 3.5-2.3-3.5h-5.4Z" fill="none" stroke="#fff" stroke-width="1"/>
<rect x="1355" y="728" width="1" height="40" fill="#5a5a5a"/>
</svg>
<div class="t" style="left:1215px;top:742px;font-size:11.5px;letter-spacing:-0.4px;color:#fff">ESP</div>
<div class="t" style="left:1249px;top:733px;width:52px;text-align:center;font-size:12px;letter-spacing:-0.25px;color:#fff">08:53</div>
<div class="t" style="left:1249px;top:751px;width:52px;text-align:center;font-size:12px;letter-spacing:0.1px;color:#fff">11/1/2023</div>

</body></html>
